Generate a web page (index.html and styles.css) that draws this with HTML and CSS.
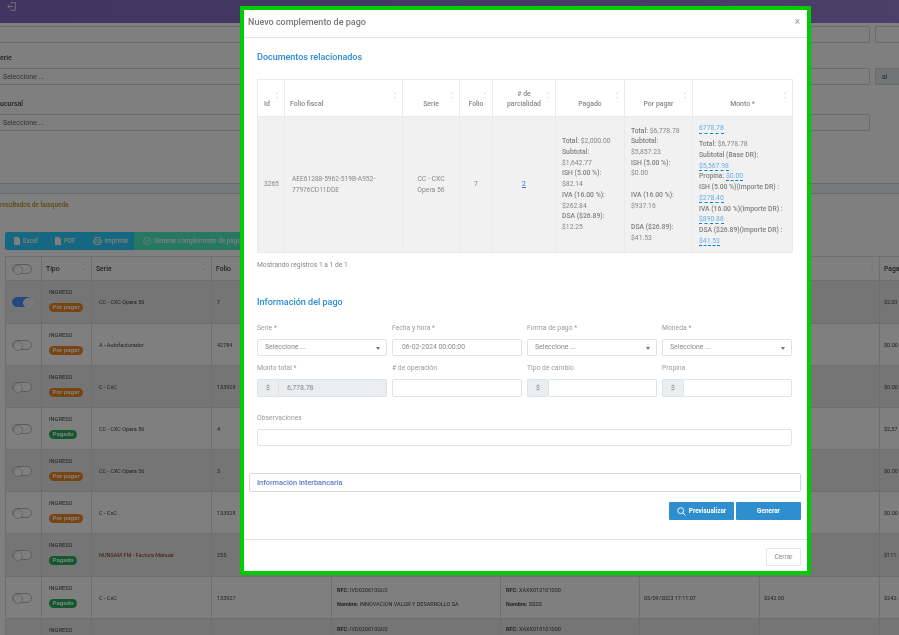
FILE: index.html
```html
<!DOCTYPE html>
<html lang="es">
<head>
<meta charset="utf-8">
<title>Nuevo complemento de pago</title>
<link rel="stylesheet" href="styles.css">
</head>
<body>
<div class="page">
<header class="topbar">
  <svg class="exit" width="9" height="9" viewBox="0 0 9 9"><path d="M4 1.5V.7h4.3v7.6H4v-.8M5.6 4.5H.8M2.6 2.6.8 4.5l1.8 1.9" fill="none" stroke="#fff" stroke-width=".8"/></svg>
</header>
<section class="filters">
  <div class="filter-row first"><div class="fake-input"></div><div class="fake-end"></div></div>
  <div class="flabel">erie</div>
  <div class="filter-row"><div class="fake-input">Seleccione ...</div><div class="addon">al</div></div>
  <div class="flabel second">ucursal</div>
  <div class="filter-row"><div class="fake-input">Seleccione ...</div></div>
</section>
<div class="band"></div>
<div class="results">resultados de busqueda</div>
<div class="toolbar">
  <div class="tool-blue">
    <span class="tool"><svg width="6" height="8" viewBox="0 0 6 8"><path d="M0 0h4l2 2v6H0z" fill="#fff"/></svg>Excel</span>
    <span class="tool"><svg width="6" height="8" viewBox="0 0 6 8"><path d="M0 0h4l2 2v6H0z" fill="#fff"/></svg>PDF</span>
    <span class="tool"><svg width="9" height="8" viewBox="0 0 9 8"><path d="M2 3V.5h5V3M2 6H.5V3h8v3H7M2 5h5v2.5H2z" fill="none" stroke="#fff" stroke-width=".9"/></svg>Imprimir</span>
  </div>
  <div class="tool-green">
    <span class="tool"><svg width="8" height="8" viewBox="0 0 8 8"><circle cx="4" cy="4" r="3.5" fill="none" stroke="#fff" stroke-width=".7"/><path d="M2.4 4.1 3.6 5.2 5.6 3" fill="none" stroke="#fff" stroke-width=".7"/></svg>Generar complemento de pago</span>
  </div>
</div>
<table class="bg-table">
  <colgroup><col class="b1"><col class="b2"><col class="b3"><col class="b4"><col class="b5"><col class="b6"><col class="b7"><col class="b8"><col class="b9"></colgroup>
  <thead><tr><th><span class="toggle"></span></th><th class="sort">Tipo</th><th class="sort">Serie</th><th>Folio</th><th></th><th></th><th></th><th class="sort"></th><th>Paga</th></tr></thead>
  <tbody>
    <tr class="tall"><td><span class="toggle on"></span></td><td class="tipo">INGRESO<span class="badge due">Por pagar</span></td><td>CC - CXC Opera 56</td><td>7</td><td></td><td></td><td></td><td></td><td>$2,00</td></tr>
    <tr><td><span class="toggle"></span></td><td class="tipo">INGRESO<span class="badge due">Por pagar</span></td><td>A - Autofacturador</td><td>42784</td><td></td><td></td><td></td><td></td><td>$0.00</td></tr>
    <tr><td><span class="toggle"></span></td><td class="tipo">INGRESO<span class="badge due">Por pagar</span></td><td>C - CxC</td><td>133929</td><td></td><td></td><td></td><td></td><td>$0.00</td></tr>
    <tr><td><span class="toggle"></span></td><td class="tipo">INGRESO<span class="badge paid">Pagado</span></td><td>CC - CXC Opera 56</td><td>4</td><td></td><td></td><td></td><td></td><td>$2,57</td></tr>
    <tr><td><span class="toggle"></span></td><td class="tipo">INGRESO<span class="badge due">Por pagar</span></td><td>CC - CXC Opera 56</td><td>3</td><td></td><td></td><td></td><td></td><td>$0.00</td></tr>
    <tr><td><span class="toggle"></span></td><td class="tipo">INGRESO<span class="badge due">Por pagar</span></td><td>C - CxC</td><td>133928</td><td></td><td></td><td></td><td></td><td>$0.00</td></tr>
    <tr class="tall"><td><span class="toggle"></span></td><td class="tipo">INGRESO<span class="badge paid">Pagado</span></td><td class="red">NUNSAM FM - Factura Manual</td><td>255</td><td></td><td></td><td></td><td></td><td>$111.</td></tr>
    <tr><td><span class="toggle"></span></td><td class="tipo">INGRESO<span class="badge paid">Pagado</span></td><td>C - CxC</td><td>133927</td><td class="party"><p><b>RFC:</b> IVD020610GU2</p><p><b>Nombre:</b> INNOVACION VALOR Y DESARROLLO SA</p></td><td class="party"><p><b>RFC:</b> XAXX010101000</p><p><b>Nombre:</b> SSSS</p></td><td>05/09/2023 17:11:07</td><td>$242.00</td><td>$242.</td></tr>
    <tr><td><span class="toggle"></span></td><td class="tipo">INGRESO</td><td></td><td></td><td class="party top"><p><b>RFC:</b> IVD020610GU2</p></td><td class="party top"><p><b>RFC:</b> XAXX010101000</p></td><td></td><td></td><td></td></tr>
  </tbody>
</table>
</div>

<div class="backdrop"></div>

<div class="modal">
  <div class="modal-head"><h1>Nuevo complemento de pago</h1><span class="close">×</span></div>
  <div class="modal-body">
    <div class="inner">
      <h2 class="first-title">Documentos relacionados</h2>
      <table class="docs">
        <colgroup><col class="c1"><col class="c2"><col class="c3"><col class="c4"><col class="c5"><col class="c6"><col class="c7"><col class="c8"></colgroup>
        <thead><tr>
          <th class="sort left">Id</th><th class="sort left narrow">Folio fiscal</th><th class="sort">Serie</th><th class="sort">Folio</th><th class="sort"># de<br>parcialidad</th><th class="sort">Pagado</th><th class="sort">Por pagar</th><th class="sort">Monto *</th>
        </tr></thead>
        <tbody><tr>
          <td class="left id">3265</td>
          <td class="left pad">AEE61288-5962-519B-A952-77976CD11DDE</td>
          <td>CC - CXC Opera 56</td>
          <td>7</td>
          <td><a class="plain">2</a></td>
          <td class="left"><b>Total:</b> $2,000.00<br><b>Subtotal:</b><br>$1,642.77<br><b>ISH (5.00 %):</b><br>$82.14<br><b>IVA (16.00 %):</b><br>$262.84<br><b>DSA ($26.89):</b><br>$12.25</td>
          <td class="left"><b>Total:</b> $6,778.78<br><b>Subtotal:</b><br>$5,857.23<br><b>ISH (5.00 %):</b> $0.00<br><br><b>IVA (16.00 %):</b><br>$937.16<br><br><b>DSA ($26.89):</b><br>$41.53</td>
          <td class="left"><a class="edit main">6778.78</a><b>Total:</b> $6,778.78<br><b>Subtotal (Base DR):</b><br><a class="edit">$5,567.98</a><br><b>Propina:</b> <a class="edit">$0.00</a><br><b>ISH (5.00 %)(Importe DR) :</b><br><a class="edit">$278.40</a><br><b>IVA (16.00 %)(Importe DR) :</b><br><a class="edit">$890.88</a><br><b>DSA ($26.89)(Importe DR) :</b><br><a class="edit">$41.53</a></td>
        </tr></tbody>
      </table>
      <p class="count">Mostrando registros 1 a 1 de 1</p>
      <h2 class="second-title">Información del pago</h2>
      <form class="form-grid">
        <div class="field"><label>Serie *</label><div class="ctl select">Seleccione ...</div></div>
        <div class="field"><label>Fecha y hora *</label><div class="ctl date">06-02-2024 00:00:00</div></div>
        <div class="field"><label>Forma de pago *</label><div class="ctl select">Seleccione ...</div></div>
        <div class="field"><label>Moneda *</label><div class="ctl select">Seleccione ...</div></div>
        <div class="field"><label>Monto total *</label><div class="group"><span class="prefix">$</span><div class="ctl tall-ctl off">6,778.78</div></div></div>
        <div class="field"><label># de operación</label><div class="ctl tall-ctl"></div></div>
        <div class="field"><label>Tipo de cambio</label><div class="group"><span class="prefix">$</span><div class="ctl tall-ctl"></div></div></div>
        <div class="field"><label>Propina</label><div class="group"><span class="prefix">$</span><div class="ctl tall-ctl"></div></div></div>
        <div class="field wide"><label>Observaciones</label><div class="ctl"></div></div>
      </form>
    </div>
    <div class="bank">Información interbancaria</div>
    <div class="actions">
      <span class="btn"><svg width="9" height="9" viewBox="0 0 9 9"><circle cx="3.7" cy="3.7" r="3" fill="none" stroke="#fff" stroke-width=".9"/><path d="m5.9 5.9 2.6 2.6" stroke="#fff" stroke-width="1"/></svg>Previsualizar</span>
      <span class="btn">Generar</span>
    </div>
  </div>
  <div class="modal-foot"><span class="close-btn">Cerrar</span></div>
</div>
</body>
</html>
```
FILE: styles.css
```css
* { box-sizing: border-box; }
html, body { margin: 0; height: 100%; overflow: hidden; }
body { font-family: Roboto, Lato, sans-serif; font-size: 6.8px; color: #555; background: #fff; width: 899px; height: 635px; }
.page { filter: blur(.35px); height: 635px; overflow: hidden; }

.topbar { height: 23px; background: linear-gradient(90deg, #7e6cc2, #9480d0); padding: 2px 7px; }
.exit { display: block; }

.filters { height: 160px; overflow: hidden; }
.filter-row { display: flex; gap: 5px; height: 17px; }
.filter-row.first { margin-top: 3px; }
.fake-input { width: 870px; flex: none; height: 17px; border: 1px solid #ccd6dd; border-left: 0; border-radius: 0 2px 2px 0; padding: 3px 3px; line-height: 10px; color: #666; font-size: 7px; }
.fake-end { flex: 1; border: 1px solid #ccd6dd; border-right: 0; border-radius: 2px 0 0 2px; }
.addon { flex: 1; background: #e4e8ec; border: 1px solid #ccd6dd; border-right: 0; color: #555; padding: 3px 6px; line-height: 10px; font-size: 7px; }
.flabel { margin: 10px 0 5px; font-weight: 500; font-size: 7px; line-height: 10px; color: #444; }
.flabel.second { margin: 14px 0 5px; }

.band { height: 11px; background: #eef1f4; border-top: 1px solid #cfd6dc; border-bottom: 1px solid #cfd6dc; }
.results { margin: 6px 0 0; height: 10px; line-height: 10px; color: #b49a20; font-weight: 500; font-size: 6.4px; }

.toolbar { display: flex; margin: 22px 0 6px 5px; height: 18px; width: 400px; }
.tool-blue { display: flex; width: 129px; background: #2ad0ff; border-radius: 2px 0 0 2px; padding-left: 9px; gap: 17px; align-items: center; }
.tool-green { flex: 1; background: #4cf0c0; padding-left: 9px; display: flex; align-items: center; }
.tool { display: inline-flex; align-items: center; gap: 3px; color: #fff; font-size: 6.3px; font-weight: 500; white-space: nowrap; }

.bg-table { table-layout: fixed; border-collapse: collapse; width: 894px; margin-left: 5px; }
.b1 { width: 36px; } .b2 { width: 50px; } .b3 { width: 120px; } .b4 { width: 120px; } .b5 { width: 169px; } .b6 { width: 139px; } .b7 { width: 120px; } .b8 { width: 120px; } .b9 { width: 20px; }
.bg-table th, .bg-table td { border: 1px solid #ddd; padding: 0 0 0 4px; font-size: 5.5px; text-align: left; vertical-align: middle; color: #444; position: relative; white-space: nowrap; }
.bg-table td:nth-child(3) { padding-left: 7px; }
.bg-table td:nth-child(4) { padding-left: 5px; }
.bg-table th { height: 24px; font-weight: 500; font-size: 6.8px; }
.bg-table tbody tr { height: 42px; }
.bg-table tbody tr.tall { height: 43px; }
.bg-table tbody tr:nth-child(odd) { background: #ebebeb; }
.bg-table td.tipo { padding: 6px 0 0 7px; line-height: 10px; font-size: 5.7px; vertical-align: top; }
.bg-table .red { color: #8a2a2a; }
.bg-table .party { padding-left: 5px; }
.bg-table .party p { margin: 0 0 5px; line-height: 9px; }
.bg-table .party p:last-child { margin: 0; }
.bg-table .party.top { vertical-align: top; padding-top: 6px; }
.bg-table td .toggle, .bg-table th .toggle { margin: 0 0 0 2px; }
.toggle { display: block; width: 20px; height: 10px; border: 1px solid #bbb; border-radius: 5px; background: #fff; position: relative; }
.toggle::after { content: ""; position: absolute; left: 0; top: 0; width: 8px; height: 8px; border-radius: 50%; background: #fff; border: 1px solid #ccc; }
.toggle.on { background: #4a90ff; border-color: #4a90ff; }
.toggle.on::after { left: 10px; border-color: #fff; background: #eee; }
.badge { display: block; width: fit-content; margin-top: 6px; padding: 0 3.5px; height: 9px; line-height: 9px; border-radius: 5px; color: #fff; font-size: 6.2px; font-weight: 700; }
.badge.due { background: #f08a24; }
.badge.paid { background: #22b35a; }

.sort::before, .sort::after { content: ""; position: absolute; right: 6px; border: 1.5px solid transparent; }
.sort::before { top: calc(50% - 6px); border-top: 0; border-bottom: 2px solid #ddd; }
.sort::after { top: calc(50% - 1px); border-bottom: 0; border-top: 2px solid #ddd; }

.backdrop { position: fixed; inset: 0; background: rgba(0, 0, 0, .5); }

.modal { position: fixed; left: 240px; top: 6px; width: 571px; height: 569px; background: #fff; border: 4px solid #00cc00; display: flex; flex-direction: column; color: #8a8a8a; }
.modal-head, .modal-body, .modal-foot { filter: blur(.35px); }
.modal-head { height: 28px; flex: none; border-bottom: 1px solid #e4e4e4; display: flex; justify-content: space-between; align-items: center; padding: 0 6px 4px 4px; }
h1 { margin: 0; font-size: 9px; font-weight: 500; color: #777; }
.close { font-size: 10px; color: #999; line-height: 1; margin-right: 1px; }
.modal-body { flex: 1; padding: 0 6px 0 5px; display: flex; flex-direction: column; }
.inner { padding: 0 9px 0 8px; }
h2 { margin: 0; font-size: 9px; line-height: 12px; font-weight: 500; color: #2a8cd2; }
.first-title { margin-top: 13px; }
.second-title { margin-top: 25px; }

.docs { table-layout: fixed; border-collapse: collapse; width: 535px; margin-top: 16px; }
.c1 { width: 27px; } .c2 { width: 118px; } .c3 { width: 57px; } .c4 { width: 33px; } .c5 { width: 63px; } .c6 { width: 69px; } .c7 { width: 68px; } .c8 { width: 100px; }
.docs th, .docs td { border: 1px solid #eaeaea; font-size: 6.8px; line-height: 10.7px; text-align: center; position: relative; padding: 0 6px; color: #888; }
.docs th { height: 37px; font-size: 6.9px; font-weight: 500; vertical-align: bottom; padding-bottom: 6px; }
.docs th.narrow { padding-left: 5px; }
.docs td { height: 136px; background: #f1f1f1; vertical-align: middle; }
.docs .left { text-align: left; }
.docs .pad { padding-left: 7px; font-size: 6.6px; }
.docs .id { font-size: 6.6px; }
.docs b { font-weight: 500; color: #808080; }
.plain { color: #2a7ac0; text-decoration: underline; }
.edit { color: #6aaeea; border-bottom: 1px dashed #0a84d0; }
.edit.main { display: block; width: fit-content; margin-bottom: 5px; }
.count { margin: 6px 0 0; line-height: 12px; font-size: 6.7px; color: #888; }

.form-grid { display: grid; grid-template-columns: repeat(4, 130px); column-gap: 5px; row-gap: 6px; margin-top: 14px; }
.field label { display: block; height: 12px; line-height: 12px; margin-bottom: 5px; font-size: 6.8px; color: #9a9a9a; }
.field.wide { grid-column: 1 / -1; margin-top: 9px; }
.ctl { height: 17px; flex: 1; border: 1px solid #dde4e6; border-radius: 2px; padding: 0 7px; line-height: 15px; font-size: 6.9px; color: #8a8a8a; background: #fff; position: relative; }
.ctl.select::after { content: ""; position: absolute; right: 6px; top: 7px; border: 2px solid transparent; border-top: 3px solid #777; border-bottom: 0; }
.ctl.date { padding-left: 9px; }
.ctl.tall-ctl { height: 18px; line-height: 16px; }
.ctl.off { background: #ebeef0; padding-left: 8px; border-radius: 0 2px 2px 0; }
.group { display: flex; height: 18px; }
.prefix { width: 21px; flex: none; background: #ebeef0; border: 1px solid #dde4e6; border-right: 0; border-radius: 2px 0 0 2px; text-align: center; line-height: 16px; font-size: 6.9px; color: #888; }

.bank { height: 19px; margin-top: 27px; border: 1px solid #cfd9e0; border-radius: 2px; padding-left: 7px; line-height: 17px; font-size: 7.4px; font-weight: 500; color: #5a7ac8; }
.actions { display: flex; justify-content: flex-end; gap: 2px; margin-top: 10px; }
.btn { width: 65px; height: 18px; background: #2f8fce; border-radius: 1px; color: #fff; font-size: 6.4px; font-weight: 700; display: flex; align-items: center; justify-content: center; gap: 3px; }
.modal-foot { height: 32px; flex: none; border-top: 1px solid #e4e4e4; display: flex; justify-content: flex-end; align-items: flex-start; padding: 8px 6px 0 0; }
.close-btn { width: 35px; height: 18px; border: 1px solid #e6e6e6; border-radius: 1px; text-align: center; line-height: 16px; font-size: 6.6px; color: #888; }
```
